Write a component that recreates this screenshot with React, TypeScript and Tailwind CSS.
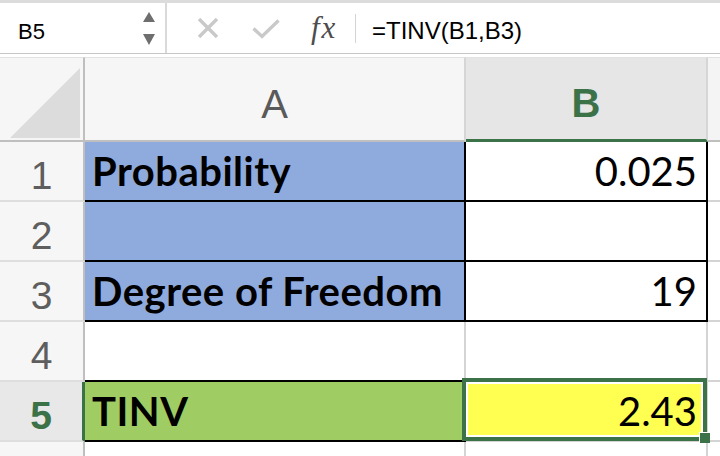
import React from "react";

export default function App() {
  return (
    <div className="w-[720px] h-[456px] overflow-hidden bg-white font-['Liberation_Sans',Arial,sans-serif]">
      {/* Formula bar */}
      <div className="h-[54px] flex border-t-[3px] border-t-[#dcdcdc] border-b border-b-[#c6c6c6] bg-white">
        <div className="w-[165px] flex items-center">
          <div className="flex-1 pl-[18px] pt-[8px] text-[22px] leading-none text-black">B5</div>
          <svg width="12" height="33" viewBox="0 0 12 33" className="mr-[10px]">
            <polygon points="0,10 12,10 6,0" fill="#6e6e6e" />
            <polygon points="0,22 12,22 6,33" fill="#6e6e6e" />
          </svg>
        </div>
        <div className="w-[2px] bg-[#d9d9d9]" />
        <div className="flex-1 flex items-center">
          <svg width="22" height="22" viewBox="0 0 22 22" className="ml-[30px]">
            <line x1="2" y1="2" x2="20" y2="20" stroke="#c9c9c9" strokeWidth="3.4" />
            <line x1="20" y1="2" x2="2" y2="20" stroke="#c9c9c9" strokeWidth="3.4" />
          </svg>
          <svg width="28" height="20" viewBox="0 0 28 20" className="ml-[33px] mt-[2px]">
            <polyline points="1.5,9.5 10,17.5 26.5,1.5" fill="none" stroke="#c9c9c9" strokeWidth="3.4" />
          </svg>
          <div className="ml-[31px] w-[31px] text-[31px] leading-none italic text-[#4d4d4d] font-['Liberation_Serif',serif] tracking-[2px] pb-[2px]">
            fx
          </div>
          <div className="ml-[13px] w-[1px] h-[29px] bg-[#d4d4d4]" />
          <div className="ml-[16px] pt-[6px] text-[24px] leading-none text-black">=TINV(B1,B3)</div>
        </div>
      </div>
      <div className="h-[3px] bg-white" />

      {/* Grid */}
      <div className="grid grid-cols-[85px_381px_242px_12px] grid-rows-[85px_60px_60px_60px_60px_60px_14px]">
        {/* Header row */}
        <div className="bg-[#f6f6f6] border-t border-t-[#e2e2e2] border-r-2 border-r-[#bfbfbf] border-b-2 border-b-[#bfbfbf]">
          <svg width="83" height="82" viewBox="0 0 83 82">
            <polygon points="80,10 80,80 10,80" fill="#dcdcdc" />
          </svg>
        </div>
        <div className="bg-[#f6f6f6] border-t border-t-[#e2e2e2] border-r-2 border-r-[#d6d6d6] border-b-2 border-b-[#bfbfbf] flex items-center justify-center pt-[9px] text-[40px] leading-none text-[#5a5a5a]">
          A
        </div>
        <div className="bg-[#e6e6e6] border-t border-t-[#e2e2e2] border-r-2 border-r-[#d6d6d6] border-b-[3px] border-b-[#3b7248] flex items-center justify-center pt-[8px] text-[40px] leading-none font-bold text-[#3b7248]">
          B
        </div>
        <div className="bg-[#f4f4f4] border-t border-t-[#e2e2e2] border-b-2 border-b-[#bfbfbf]" />

        {/* Row 1 */}
        <RowHead n="1" />
        <div className="bg-[#8faadc] border-r-2 border-r-black border-b-2 border-b-black flex items-center pl-[7px] text-[40px] leading-[48px] font-bold tracking-[0.5px] text-black font-['Lato',sans-serif]">
          Probability
        </div>
        <div className="bg-white border-r-2 border-r-black border-b-2 border-b-black flex items-center justify-end pr-[9px] text-[40px] leading-[48px] text-black font-['Lato',sans-serif]">
          0.025
        </div>
        <div className="border-b-2 border-b-[#d4d4d4]" />

        {/* Row 2 */}
        <RowHead n="2" />
        <div className="bg-[#8faadc] border-r-2 border-r-black border-b-2 border-b-black" />
        <div className="bg-white border-r-2 border-r-black border-b-2 border-b-black" />
        <div className="border-b-2 border-b-[#d4d4d4]" />

        {/* Row 3 */}
        <RowHead n="3" />
        <div className="bg-[#8faadc] border-r-2 border-r-black border-b-2 border-b-black flex items-center pl-[7px] text-[40px] leading-[48px] font-bold tracking-[0.5px] text-black font-['Lato',sans-serif]">
          Degree of Freedom
        </div>
        <div className="bg-white border-r-2 border-r-black border-b-2 border-b-black flex items-center justify-end pr-[9px] text-[40px] leading-[48px] text-black font-['Lato',sans-serif]">
          19
        </div>
        <div className="border-b-2 border-b-[#d4d4d4]" />

        {/* Row 4 */}
        <RowHead n="4" />
        <div className="border-r-2 border-r-[#d4d4d4] border-b-2 border-b-black" />
        <div className="border-r-2 border-r-[#d4d4d4] border-b-2 border-b-[#d4d4d4]" />
        <div className="border-b-2 border-b-[#d4d4d4]" />

        {/* Row 5 */}
        <div className="bg-[#e8e8e8] border-r-[3px] border-r-[#3b7248] border-b-2 border-b-[#dedede] flex items-center justify-center pt-[8px] text-[39px] leading-none font-bold text-[#3b7248]">
          5
        </div>
        <div className="bg-[#a0cd63] border-r-2 border-r-black border-b-2 border-b-black flex items-center pl-[7px] text-[40px] leading-[48px] font-bold tracking-[0.5px] text-black font-['Lato',sans-serif]">
          TINV
        </div>
        <div className="relative bg-[#ffff52] border-r-2 border-r-[#d4d4d4] border-b-2 border-b-[#d4d4d4] flex items-center justify-end pr-[9px] text-[40px] leading-[48px] text-black font-['Lato',sans-serif]">
          2.43
          <div className="absolute left-[-4px] top-[-4px] right-[-1px] bottom-[-1px] border-4 border-[#3b7248]">
            <div className="absolute inset-0 border-2 border-white" />
          </div>
          <div className="absolute right-[-4px] bottom-[-3px] w-[11px] h-[11px] bg-[#3b7248] border-l border-t border-white" />
        </div>
        <div className="border-b-2 border-b-[#d4d4d4]" />

        {/* Row 6 */}
        <div className="bg-[#f6f6f6] border-r-2 border-r-[#bfbfbf]" />
        <div className="border-r-2 border-r-[#d4d4d4]" />
        <div className="border-r-2 border-r-[#d4d4d4]" />
        <div />
      </div>
    </div>
  );
}

function RowHead({ n }: { n: string }) {
  return (
    <div className="bg-[#f6f6f6] border-r-2 border-r-[#bfbfbf] border-b-2 border-b-[#dedede] flex items-center justify-center pt-[8px] text-[39px] leading-none text-[#5e5e5e]">
      {n}
    </div>
  );
}
